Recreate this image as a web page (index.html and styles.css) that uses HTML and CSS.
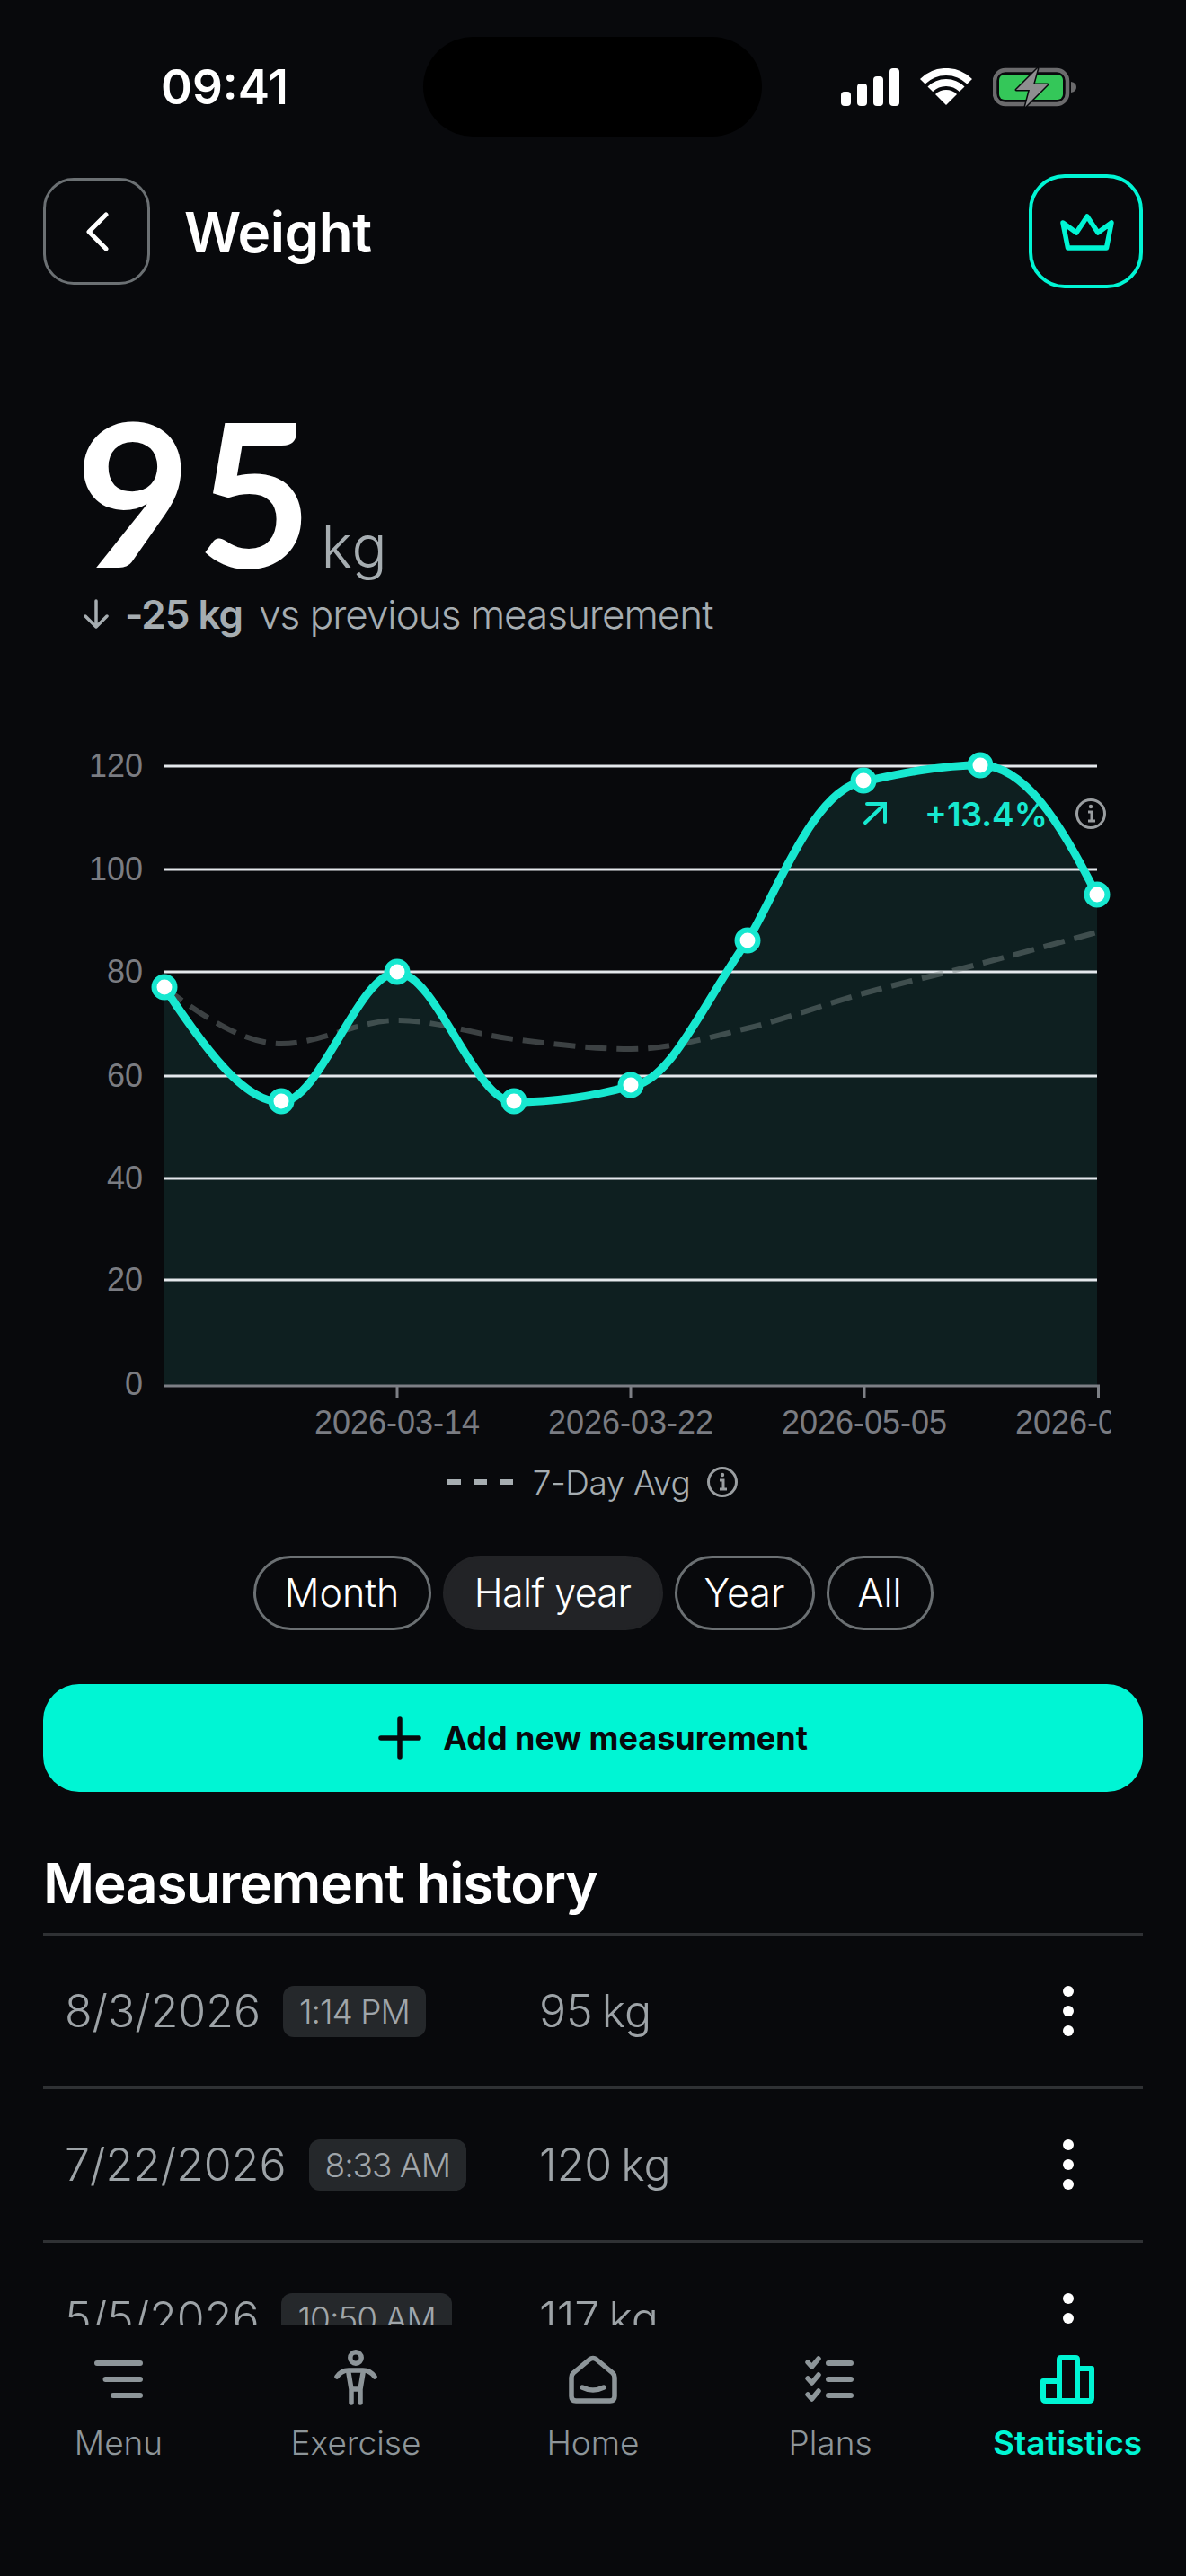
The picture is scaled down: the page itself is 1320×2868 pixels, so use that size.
FILE: index.html
```html
<!DOCTYPE html>
<html lang="en">
  <head>
    <meta charset="UTF-8" />
    <meta name="viewport" content="width=device-width, initial-scale=1.0" />
    <title>Weight</title>
    <link rel="stylesheet" href="styles.css">
  </head>
  <body>
    <div class="screen">
      <div class="island"></div>

      <div class="statusbar">
        <span class="clock">09:41</span>
        <div class="status-icons">
          <svg width="65" height="42" viewBox="0 0 65 42">
            <rect x="0" y="26" width="11" height="16" rx="4" fill="#fff" />
            <rect x="18" y="17" width="11" height="25" rx="4" fill="#fff" />
            <rect x="36" y="9" width="11" height="33" rx="4" fill="#fff" />
            <rect x="54" y="0" width="11" height="42" rx="4" fill="#fff" />
          </svg>
          <svg width="58" height="42" viewBox="0 0 58 42">
            <path d="M2.8 14.8 A37 37 0 0 1 55.2 14.8" fill="none" stroke="#fff" stroke-width="8" />
            <path d="M11.3 23.3 A25 25 0 0 1 46.7 23.3" fill="none" stroke="#fff" stroke-width="8" />
            <path d="M29 41 L17 29 A17 17 0 0 1 41 29 Z" fill="#fff" />
          </svg>
          <svg width="93" height="48" viewBox="0 0 93 48">
            <rect x="2" y="5" width="81" height="38" rx="12" fill="none" stroke="#6b6b6d" stroke-width="4.5" />
            <rect x="7" y="10" width="71" height="28" rx="6" fill="#34c759" />
            <path d="M87 18 Q93 19 93 24 Q93 29 87 30 Z" fill="#6b6b6d" />
            <path d="M50 3 L26 27 H41 L36 46 L61 21 H45 Z" fill="#8e8e90" stroke="#08090c" stroke-width="3" stroke-linejoin="round" paint-order="stroke" />
          </svg>
        </div>
      </div>

      <div class="topbar">
        <div class="topbar-left">
          <button class="back-btn">
            <svg width="26" height="44" viewBox="0 0 26 44">
              <path d="M23 3 L4 22 L23 41" fill="none" stroke="#fff" stroke-width="5" stroke-linecap="round" stroke-linejoin="round" />
            </svg>
          </button>
          <h1 class="page-title">Weight</h1>
        </div>
        <button class="crown-btn">
          <svg width="62" height="46" viewBox="0 0 62 46">
            <path d="M5 13 L20 24 L32 6 L44 24 L59 13 L53.5 41 H10.5 Z" fill="none" stroke="#00f5d4" stroke-width="5.5" stroke-linejoin="round" />
          </svg>
        </button>
      </div>

      <div class="hero">
        <div class="hero-value">
          <span class="big-number">95</span>
          <span class="big-unit">kg</span>
        </div>
        <div class="hero-delta">
          <svg width="28" height="34" viewBox="0 0 28 34">
            <path d="M14 2 V31 M2 19 L14 31 L26 19" fill="none" stroke="#a6adb1" stroke-width="3.5" stroke-linecap="round" stroke-linejoin="round" />
          </svg>
          <span class="delta-num">-25 kg</span>
          <span class="delta-note">vs previous measurement</span>
        </div>
      </div>

      <svg class="chart" width="1320" height="800" viewBox="0 820 1320 800">
        <defs>
          <clipPath id="labelClip"><rect x="0" y="1550" width="1236" height="70" /></clipPath>
        </defs>

        <path class="area" d="M183 1100 C226.25 1163.5 269.75 1227 313 1227 C356.25 1227 398.75 1083 442 1083 C485.25 1083 528.75 1227 572 1227 C615.25 1227 658.75 1221.2 702 1209 C745 1207 782 1118 832 1047 C862 1000 905 878 961 870 C990 864 1040 852 1091 852 C1140 852 1180 915 1221 997 V1543 H183 Z" />

        <g class="grid">
          <line x1="183" x2="1221" y1="853" y2="853" />
          <line x1="183" x2="1221" y1="968" y2="968" />
          <line x1="183" x2="1221" y1="1082" y2="1082" />
          <line x1="183" x2="1221" y1="1198" y2="1198" />
          <line x1="183" x2="1221" y1="1312" y2="1312" />
          <line x1="183" x2="1221" y1="1425" y2="1425" />
        </g>

        <g class="axis">
          <line x1="183" x2="1224" y1="1543" y2="1543" />
          <line x1="442" x2="442" y1="1543" y2="1557" />
          <line x1="702" x2="702" y1="1543" y2="1557" />
          <line x1="962" x2="962" y1="1543" y2="1557" />
          <line x1="1222.5" x2="1222.5" y1="1543" y2="1557" />
        </g>

        <g class="y-labels">
          <text x="159" y="865">120</text>
          <text x="159" y="980">100</text>
          <text x="159" y="1094">80</text>
          <text x="159" y="1210">60</text>
          <text x="159" y="1324">40</text>
          <text x="159" y="1437">20</text>
          <text x="159" y="1553">0</text>
        </g>

        <g class="x-labels" clip-path="url(#labelClip)">
          <text x="442" y="1596">2026-03-14</text>
          <text x="702" y="1596">2026-03-22</text>
          <text x="962" y="1596">2026-05-05</text>
          <text x="1222" y="1596">2026-08-03</text>
        </g>

        <path class="avg-line" d="M183 1100 C226.25 1131 269.75 1162 313 1162 C356.25 1162 398.75 1136 442 1136 C485.25 1136 528.75 1151.7 572 1157 C615.25 1162.3 658.75 1168 702 1168 C745.25 1168 788 1155.3 831 1145 C874 1134.7 918 1118 961 1106 C1004 1094 1048 1084.3 1091 1073 C1134 1061.7 1178 1049.8 1221 1038" />
        <path class="weight-line" d="M183 1100 C226.25 1163.5 269.75 1227 313 1227 C356.25 1227 398.75 1083 442 1083 C485.25 1083 528.75 1227 572 1227 C615.25 1227 658.75 1221.2 702 1209 C745 1207 782 1118 832 1047 C862 1000 905 878 961 870 C990 864 1040 852 1091 852 C1140 852 1180 915 1221 997" />

        <g class="points">
          <circle cx="183" cy="1099" r="11.5" />
          <circle cx="313" cy="1226" r="11.5" />
          <circle cx="442" cy="1082" r="11.5" />
          <circle cx="572" cy="1226" r="11.5" />
          <circle cx="702" cy="1208" r="11.5" />
          <circle cx="832" cy="1047" r="11.5" />
          <circle cx="961" cy="869" r="11.5" />
          <circle cx="1091" cy="852" r="11.5" />
          <circle cx="1221" cy="996" r="11.5" />
        </g>

        <path class="trend-arrow" d="M963 916 L985 895 M965 895 H985 V915" />
        <text class="trend-text" x="1029" y="920">+13.4%</text>

        <g class="info" transform="translate(1214 906)">
          <circle r="15.5" />
          <path d="M-3 -2 H1 V8 M-3 8 H5" />
          <circle class="info-dot" cx="0" cy="-8" r="2.2" />
        </g>
      </svg>

      <div class="legend">
        <span class="legend-dashes"><i></i><i></i><i></i></span>
        <span class="legend-text">7-Day Avg</span>
        <svg width="36" height="36" viewBox="-18 -18 36 36" class="legend-info">
          <circle r="15.5" />
          <path d="M-3 -2 H1 V8 M-3 8 H5" />
          <circle class="info-dot" cx="0" cy="-8" r="2.2" />
        </svg>
      </div>

      <div class="pills">
        <button class="pill pill-month">Month</button>
        <button class="pill pill-half pill-active">Half year</button>
        <button class="pill pill-year">Year</button>
        <button class="pill pill-all">All</button>
      </div>

      <button class="add-btn">
        <svg width="48" height="48" viewBox="0 0 48 48">
          <path d="M24 3 V45 M3 24 H45" fill="none" stroke="#08090c" stroke-width="5.5" stroke-linecap="round" />
        </svg>
        <span>Add new measurement</span>
      </button>

      <h2 class="history-title">Measurement history</h2>

      <div class="history">
        <div class="history-row">
          <div class="row-date">
            <span class="date">8/3/2026</span>
            <span class="time">1:14 PM</span>
          </div>
          <span class="weight">95 kg</span>
          <span class="row-menu"><i></i><i></i><i></i></span>
        </div>
        <div class="history-row">
          <div class="row-date">
            <span class="date">7/22/2026</span>
            <span class="time">8:33 AM</span>
          </div>
          <span class="weight">120 kg</span>
          <span class="row-menu"><i></i><i></i><i></i></span>
        </div>
        <div class="history-row">
          <div class="row-date">
            <span class="date">5/5/2026</span>
            <span class="time">10:50 AM</span>
          </div>
          <span class="weight">117 kg</span>
          <span class="row-menu"><i></i><i></i><i></i></span>
        </div>
      </div>

      <nav class="tabbar">
        <div class="tab">
          <svg width="60" height="60" viewBox="0 0 60 60">
            <path d="M6 13 H54 M15.5 31 H54 M24 49 H54" fill="none" stroke="#8d9599" stroke-width="6" stroke-linecap="round" />
          </svg>
          <span>Menu</span>
        </div>
        <div class="tab">
          <svg width="60" height="60" viewBox="0 0 60 60">
            <circle cx="30" cy="7" r="6.2" fill="none" stroke="#8d9599" stroke-width="5.5" />
            <path d="M9 28 Q14 21 22 21 H38 Q46 21 51 28" fill="none" stroke="#8d9599" stroke-width="5.5" stroke-linecap="round" />
            <path d="M22 24 L25 42 V57 M38 24 L35 42 V57 M25 42 H35" fill="none" stroke="#8d9599" stroke-width="5.5" stroke-linecap="round" stroke-linejoin="round" />
          </svg>
          <span>Exercise</span>
        </div>
        <div class="tab">
          <svg width="60" height="60" viewBox="0 0 60 60">
            <path d="M6 29 Q6 26 8 24 L26 9 Q30 6 34 9 L52 24 Q54 26 54 29 V50 Q54 55 49 55 H11 Q6 55 6 50 Z" fill="none" stroke="#8d9599" stroke-width="5.5" stroke-linejoin="round" />
            <path d="M18 40 Q30 46 42 40" fill="none" stroke="#8d9599" stroke-width="5.5" stroke-linecap="round" />
          </svg>
          <span>Home</span>
        </div>
        <div class="tab">
          <svg width="60" height="60" viewBox="0 0 60 60">
            <path d="M28 13 H53 M28 31 H53 M28 49 H53" fill="none" stroke="#8d9599" stroke-width="6" stroke-linecap="round" />
            <path d="M5 12 L9.5 17 L17 8 M5 30 L9.5 35 L17 26 M5 48 L9.5 53 L17 44" fill="none" stroke="#8d9599" stroke-width="5.5" stroke-linecap="round" stroke-linejoin="round" />
          </svg>
          <span>Plans</span>
        </div>
        <div class="tab tab-active">
          <svg width="60" height="60" viewBox="0 0 60 60">
            <path d="M3 52 V33 H21 V9 Q21 7 23 7 H39 Q41 7 41 9 V19 H57 V52 Q57 55 54 55 H6 Q3 55 3 52 Z M21 33 V55 M41 19 V55" fill="none" stroke="#00f5d4" stroke-width="6" stroke-linejoin="round" />
          </svg>
          <span>Statistics</span>
        </div>
      </nav>
    </div>
  </body>
</html>
```

FILE: styles.css
```css
* {
  padding: 0;
  margin: 0;
  box-sizing: border-box;
}
html,
body {
  width: 1320px;
  height: 2868px;
  overflow: hidden;
  background-color: #08090c;
}
body {
  font-family: Inter, "Liberation Sans", sans-serif;
  color: #fff;
}
button {
  font-family: inherit;
  background: none;
  cursor: pointer;
}
.screen {
  position: relative;
  display: flex;
  flex-direction: column;
  width: 1320px;
  height: 2868px;
  overflow: hidden;
}
.island {
  position: absolute;
  left: 471px;
  top: 41px;
  width: 377px;
  height: 111px;
  border-radius: 56px;
  background-color: #000;
}

/* status bar */
.statusbar {
  display: flex;
  align-items: center;
  justify-content: space-between;
  flex-shrink: 0;
  height: 194px;
  padding: 0 122px 0 179px;
}
.clock {
  font-size: 53px;
  font-weight: 600;
}
.status-icons {
  display: flex;
  align-items: center;
  gap: 23px;
}

/* header */
.topbar {
  display: flex;
  align-items: center;
  justify-content: space-between;
  flex-shrink: 0;
  height: 127px;
  padding: 0 48px;
}
.topbar-left {
  display: flex;
  align-items: center;
  gap: 38px;
}
.back-btn {
  display: flex;
  align-items: center;
  justify-content: center;
  width: 119px;
  height: 119px;
  border: 3px solid #6b7073;
  border-radius: 34px;
}
.page-title {
  padding-top: 2px;
  font-size: 62px;
  font-weight: 600;
  letter-spacing: -0.5px;
}
.crown-btn {
  display: flex;
  align-items: center;
  justify-content: center;
  width: 127px;
  height: 127px;
  border: 4px solid #00f5d4;
  border-radius: 40px;
}

/* current value */
.hero {
  flex-shrink: 0;
  height: 499px;
  padding: 123px 0 0 84px;
}
.hero-value {
  display: flex;
  align-items: baseline;
  gap: 4px;
  height: 205px;
}
.big-number {
  font-family: Lato, Inter, sans-serif;
  font-size: 222px;
  font-weight: 700;
  line-height: 205px;
  letter-spacing: 6px;
}
.big-unit {
  font-size: 65px;
  font-weight: 300;
  letter-spacing: 1px;
  color: #a6adb1;
}
.hero-delta {
  display: flex;
  align-items: center;
  padding-left: 9px;
  margin-top: 8px;
  font-size: 44px;
  color: #a6adb1;
}
.delta-num {
  margin-left: 18px;
  font-weight: 600;
  letter-spacing: -1px;
}
.delta-note {
  margin-left: 18px;
  font-weight: 300;
  letter-spacing: -1px;
}

/* chart */
.chart {
  display: block;
  flex-shrink: 0;
}
.area {
  fill: #0e1f20;
}
.grid line {
  stroke: #e4e8ec;
  stroke-width: 3;
}
.axis line {
  stroke: #7c7f85;
  stroke-width: 3;
}
.y-labels text,
.x-labels text {
  font-family: "Liberation Sans", sans-serif;
  font-size: 36px;
  fill: #7a7c82;
}
.y-labels text {
  text-anchor: end;
}
.x-labels text {
  text-anchor: middle;
}
.avg-line {
  fill: none;
  stroke: rgba(125, 135, 135, 0.45);
  stroke-width: 6;
  stroke-dasharray: 24 11;
}
.weight-line {
  fill: none;
  stroke: #17e8d0;
  stroke-width: 9;
}
.points circle {
  fill: #fff;
  stroke: #17e8d0;
  stroke-width: 6;
}
.trend-arrow {
  fill: none;
  stroke: #17e8d0;
  stroke-width: 4;
  stroke-linecap: round;
}
.trend-text {
  font-size: 37px;
  font-weight: 600;
  fill: #17e8d0;
}
.info circle,
.legend-info circle {
  fill: none;
  stroke: #9a9ea1;
  stroke-width: 3;
}
.info path,
.legend-info path {
  fill: none;
  stroke: #9a9ea1;
  stroke-width: 3;
}
.info .info-dot,
.legend-info .info-dot {
  fill: #9a9ea1;
  stroke: none;
}

/* legend */
.legend {
  display: flex;
  align-items: center;
  justify-content: center;
  flex-shrink: 0;
  height: 60px;
}
.legend-dashes {
  display: flex;
  gap: 14px;
  margin-right: 22px;
}
.legend-dashes i {
  width: 15px;
  height: 6px;
  background-color: #a6adb1;
}
.legend-text {
  font-size: 37px;
  font-weight: 300;
  letter-spacing: -0.4px;
  color: #a6adb1;
}
.legend-info {
  margin-left: 18px;
}

/* range pills */
.pills {
  display: flex;
  justify-content: center;
  gap: 13px;
  flex-shrink: 0;
  margin-top: 52px;
}
.pill {
  height: 83px;
  padding-bottom: 2px;
  border: 3px solid #6b7073;
  border-radius: 42px;
  font-size: 43px;
  font-weight: 300;
  color: #fff;
}
.pill-month {
  width: 198px;
}
.pill-half {
  width: 245px;
  letter-spacing: -0.6px;
}
.pill-year {
  width: 156px;
}
.pill-all {
  width: 119px;
}
.pill-active {
  background-color: #222326;
  border-color: #222326;
}

/* add button */
.add-btn {
  display: flex;
  align-items: center;
  justify-content: center;
  gap: 24px;
  flex-shrink: 0;
  height: 120px;
  margin: 60px 48px 0;
  border: none;
  border-radius: 40px;
  background-color: #00f5d4;
  font-size: 36px;
  font-weight: 700;
  color: #08090c;
}

/* history */
.history-title {
  flex-shrink: 0;
  margin: 64px 48px 0;
  font-size: 62px;
  font-weight: 600;
  line-height: 75px;
  letter-spacing: -1.2px;
}
.history {
  flex: 1;
  min-height: 0;
  margin: 18px 48px 0;
  overflow: hidden;
}
.history-row {
  display: flex;
  align-items: center;
  height: 171px;
  padding: 0 24px;
  border-top: 3px solid #2f3134;
}
.row-date {
  display: flex;
  align-items: center;
  gap: 25px;
  width: 528px;
}
.date,
.weight {
  font-size: 50px;
  font-weight: 300;
  color: #9da3a7;
}
.weight {
  word-spacing: -4px;
}
.time {
  padding: 0 18px;
  height: 57px;
  line-height: 57px;
  border-radius: 12px;
  background-color: #25282b;
  font-size: 37px;
  font-weight: 300;
  letter-spacing: -1px;
  color: #a0a6aa;
}
.row-menu {
  display: flex;
  flex-direction: column;
  gap: 10px;
  margin-left: auto;
  margin-right: 53px;
}
.row-menu i {
  width: 12px;
  height: 12px;
  border-radius: 50%;
  background-color: #fff;
}

/* bottom tabs */
.tabbar {
  display: flex;
  flex-shrink: 0;
  height: 279px;
  background-color: #08090c;
}
.tab {
  display: flex;
  flex-direction: column;
  align-items: center;
  width: 264px;
  padding-top: 29px;
  font-size: 37px;
  font-weight: 300;
  color: #8d9599;
}
.tab svg {
  overflow: visible;
  margin-bottom: 19px;
}
.tab-active {
  font-weight: 600;
  color: #00f5d4;
}
```
